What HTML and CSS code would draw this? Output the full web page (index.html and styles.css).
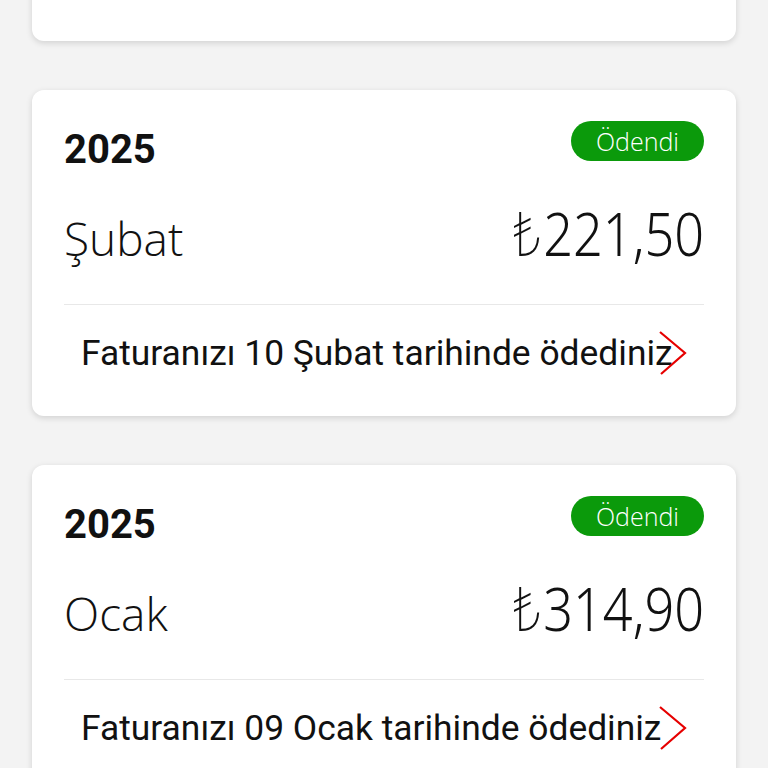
FILE: index.html
```html
<!DOCTYPE html>
<html>
	<head>
		<meta charset="utf-8" />
		<meta name="viewport" content="width=device-width,initial-scale=1" />
		<title>Faturalarım</title>
		<link rel="stylesheet" href="styles.css">
	</head>
	<body>
		<main class="bills">
			<article class="bill">
				<div class="bill-head">
					<span class="bill-year">2025</span>
					<span class="bill-status">Ödendi</span>
				</div>
				<div class="bill-main">
					<span class="bill-month">Mart</span>
					<span class="bill-amount"><span class="cur">₺</span>221,50</span>
				</div>
				<a class="bill-foot" href="javascript:">
					<span>Faturanızı 10 Mart tarihinde ödediniz</span>
					<svg class="chev" width="30" height="46" viewBox="0 0 30 46"><polyline points="2,2 27,23 3,44" /></svg>
				</a>
			</article>
			<article class="bill">
				<div class="bill-head">
					<span class="bill-year">2025</span>
					<span class="bill-status">Ödendi</span>
				</div>
				<div class="bill-main">
					<span class="bill-month">Şubat</span>
					<span class="bill-amount"><span class="cur">₺</span>221,50</span>
				</div>
				<a class="bill-foot" href="javascript:">
					<span>Faturanızı 10 Şubat tarihinde ödediniz</span>
					<svg class="chev" width="30" height="46" viewBox="0 0 30 46"><polyline points="2,2 27,23 3,44" /></svg>
				</a>
			</article>
			<article class="bill">
				<div class="bill-head">
					<span class="bill-year">2025</span>
					<span class="bill-status">Ödendi</span>
				</div>
				<div class="bill-main">
					<span class="bill-month">Ocak</span>
					<span class="bill-amount"><span class="cur">₺</span>314,90</span>
				</div>
				<a class="bill-foot" href="javascript:">
					<span>Faturanızı 09 Ocak tarihinde ödediniz</span>
					<svg class="chev" width="30" height="46" viewBox="0 0 30 46"><polyline points="2,2 27,23 3,44" /></svg>
				</a>
			</article>
		</main>
	</body>
</html>
```

FILE: styles.css
```css
*{margin: 0;padding: 0;box-sizing: border-box;}
body{
	background: #f3f3f3;
	font-family: Roboto, "Noto Sans", sans-serif;
	color: #111;
	overflow: hidden;
}
a{
	text-decoration: none;
	color: inherit;
}
.bills{
	display: flex;
	flex-direction: column;
	gap: 49px;
	padding: 0 32px;
	margin-top: -285px;
}
.bill{
	background: #fff;
	border-radius: 12px;
	box-shadow: 0 2px 6px rgba(0,0,0,0.14);
	padding: 31px 32px 16px;
}
.bill-head{
	display: flex;
	justify-content: space-between;
	align-items: flex-start;
}
.bill-year{
	margin-top: 5px;
	font-weight: 700;
	font-size: 40px;
	line-height: 48px;
}
.bill-status{
	height: 40px;
	padding: 0 25px;
	border-radius: 20px;
	background: #0b9a0b;
	color: #fff;
	font-family: "Open Sans", sans-serif;
	font-weight: 300;
	font-size: 25px;
	line-height: 40px;
}
.bill-main{
	display: flex;
	justify-content: space-between;
	align-items: baseline;
	padding: 29px 0 41px;
	border-bottom: 1px solid #e8e8e8;
	font-family: "Open Sans", sans-serif;
	font-weight: 300;
	line-height: 1;
}
.bill-month{
	font-size: 46px;
}
/* the original digits are narrow and light */
.bill-amount{
	display: inline-block;
	font-family: "Noto Sans", sans-serif;
	font-weight: 300;
	font-size: 60px;
	transform: scaleX(0.87);
	transform-origin: right bottom;
}
.cur{
	font-weight: 200;
	font-size: 60px;
	margin-right: 1px;
}
.bill-foot{
	display: flex;
	justify-content: space-between;
	align-items: center;
	height: 95px;
	padding: 0 16px 0 17px;
	font-size: 35.4px;
}
.chev{
	flex: none;
	margin-left: -30px;
}
.chev polyline{
	fill: none;
	stroke: #e60000;
	stroke-width: 2.2;
}
```
